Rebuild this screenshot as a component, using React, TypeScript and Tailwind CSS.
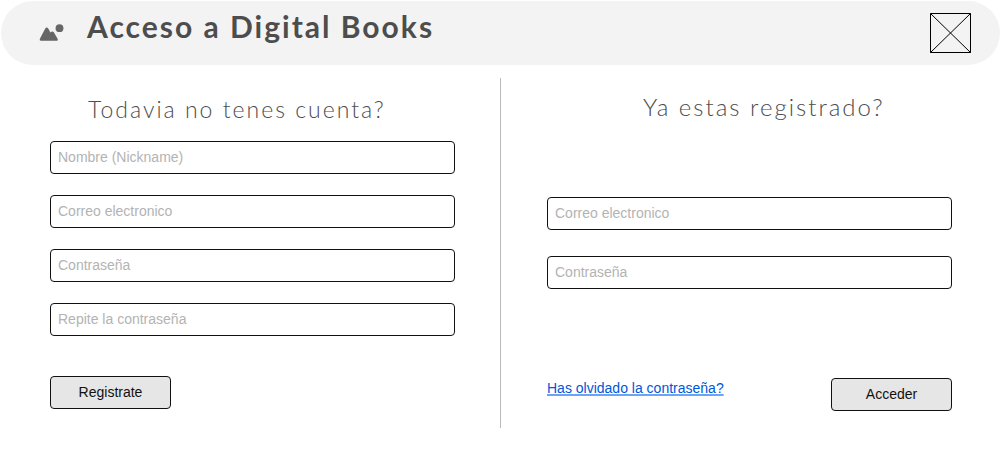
import { InputHTMLAttributes } from "react";

function Field({ label, ...props }: { label: string } & InputHTMLAttributes<HTMLInputElement>) {
  return (
    <input
      {...props}
      aria-label={label}
      placeholder={label}
      className="block h-[33px] w-full rounded-[4px] border border-[#111] bg-white px-[7px] pb-0.5 text-sm text-[#111] placeholder:text-[#b3b3b3]"
    />
  );
}

const buttonClass =
  "h-[33px] w-[121px] rounded-[4px] border border-[#111] bg-[#e6e6e6] pb-0.5 text-sm text-[#111]";

export default function App() {
  return (
    <div className="bg-white pt-px font-['Liberation_Sans',Arial,sans-serif]">
      <header className="ml-px flex h-16 items-start rounded-full bg-[#f3f3f3] pr-7 pl-[38px]">
        <svg className="mt-[22px] h-[18px] w-[25px]" viewBox="0 0 25 18" fill="#666" aria-hidden="true">
          <path d="M1 15.500 L6 6 Q7.600 3.200 9.400 5.800 L11.400 9.600 Q13.400 7.400 14.800 9.300 L18.600 15.800 Q19.400 17.700 18 17.700 H2 Q.1 17.700 1 15.500Z" />
          <circle cx="20.500" cy="5.200" r="3.900" />
        </svg>
        <h1 className="ml-[23px] pt-[7px] font-['Lato',sans-serif] text-[30px] leading-9 font-bold tracking-[2px] text-[#4d4d4d]">
          Acceso a Digital Books
        </h1>
        <svg className="mt-3 mr-px ml-auto h-10 w-[41px]" viewBox="0 0 41 40" fill="none" stroke="#000" aria-hidden="true">
          <path d="M.5 .5H40.500V39.500H.5ZM.5 .5L40.500 39.500M40.500 .5L.5 39.500" />
        </svg>
      </header>
      <main className="mt-[13px] flex">
        <form className="h-[350px] w-1/2 shrink-0 pr-[45px] pl-[50px]" onSubmit={(e) => e.preventDefault()}>
          <h2 className="mt-[15px] pl-[38px] font-['Lato',sans-serif] text-[23px] leading-8 font-light tracking-[2px] text-[#4d4d4d]">
            Todavia no tenes cuenta?
          </h2>
          <div className="mt-4 flex flex-col gap-[21px]">
            <Field label="Nombre (Nickname)" />
            <Field label="Correo electronico" type="email" />
            <Field label="Contraseña" type="password" />
            <Field label="Repite la contraseña" type="password" />
          </div>
          <button className={`mt-10 ${buttonClass}`}>Registrate</button>
        </form>
        <form className="flex-1 border-l border-[#bbb] pr-12 pl-[46px]" onSubmit={(e) => e.preventDefault()}>
          <h2 className="mt-[13px] pl-24 font-['Lato',sans-serif] text-2xl leading-8 font-light tracking-[2px] text-[#4d4d4d]">
            Ya estas registrado?
          </h2>
          <div className="mt-[74px] flex flex-col gap-[26px]">
            <Field label="Correo electronico" type="email" />
            <Field label="Contraseña" type="password" />
          </div>
          <div className="mt-[89px] flex items-start justify-between">
            <a
              href="#recuperar"
              className="text-sm text-[#0057d8] underline decoration-[#6ba3f5] decoration-2 underline-offset-1 [text-decoration-skip-ink:none]"
            >
              Has olvidado la contraseña?
            </a>
            <button className={buttonClass}>Acceder</button>
          </div>
        </form>
      </main>
    </div>
  );
}
